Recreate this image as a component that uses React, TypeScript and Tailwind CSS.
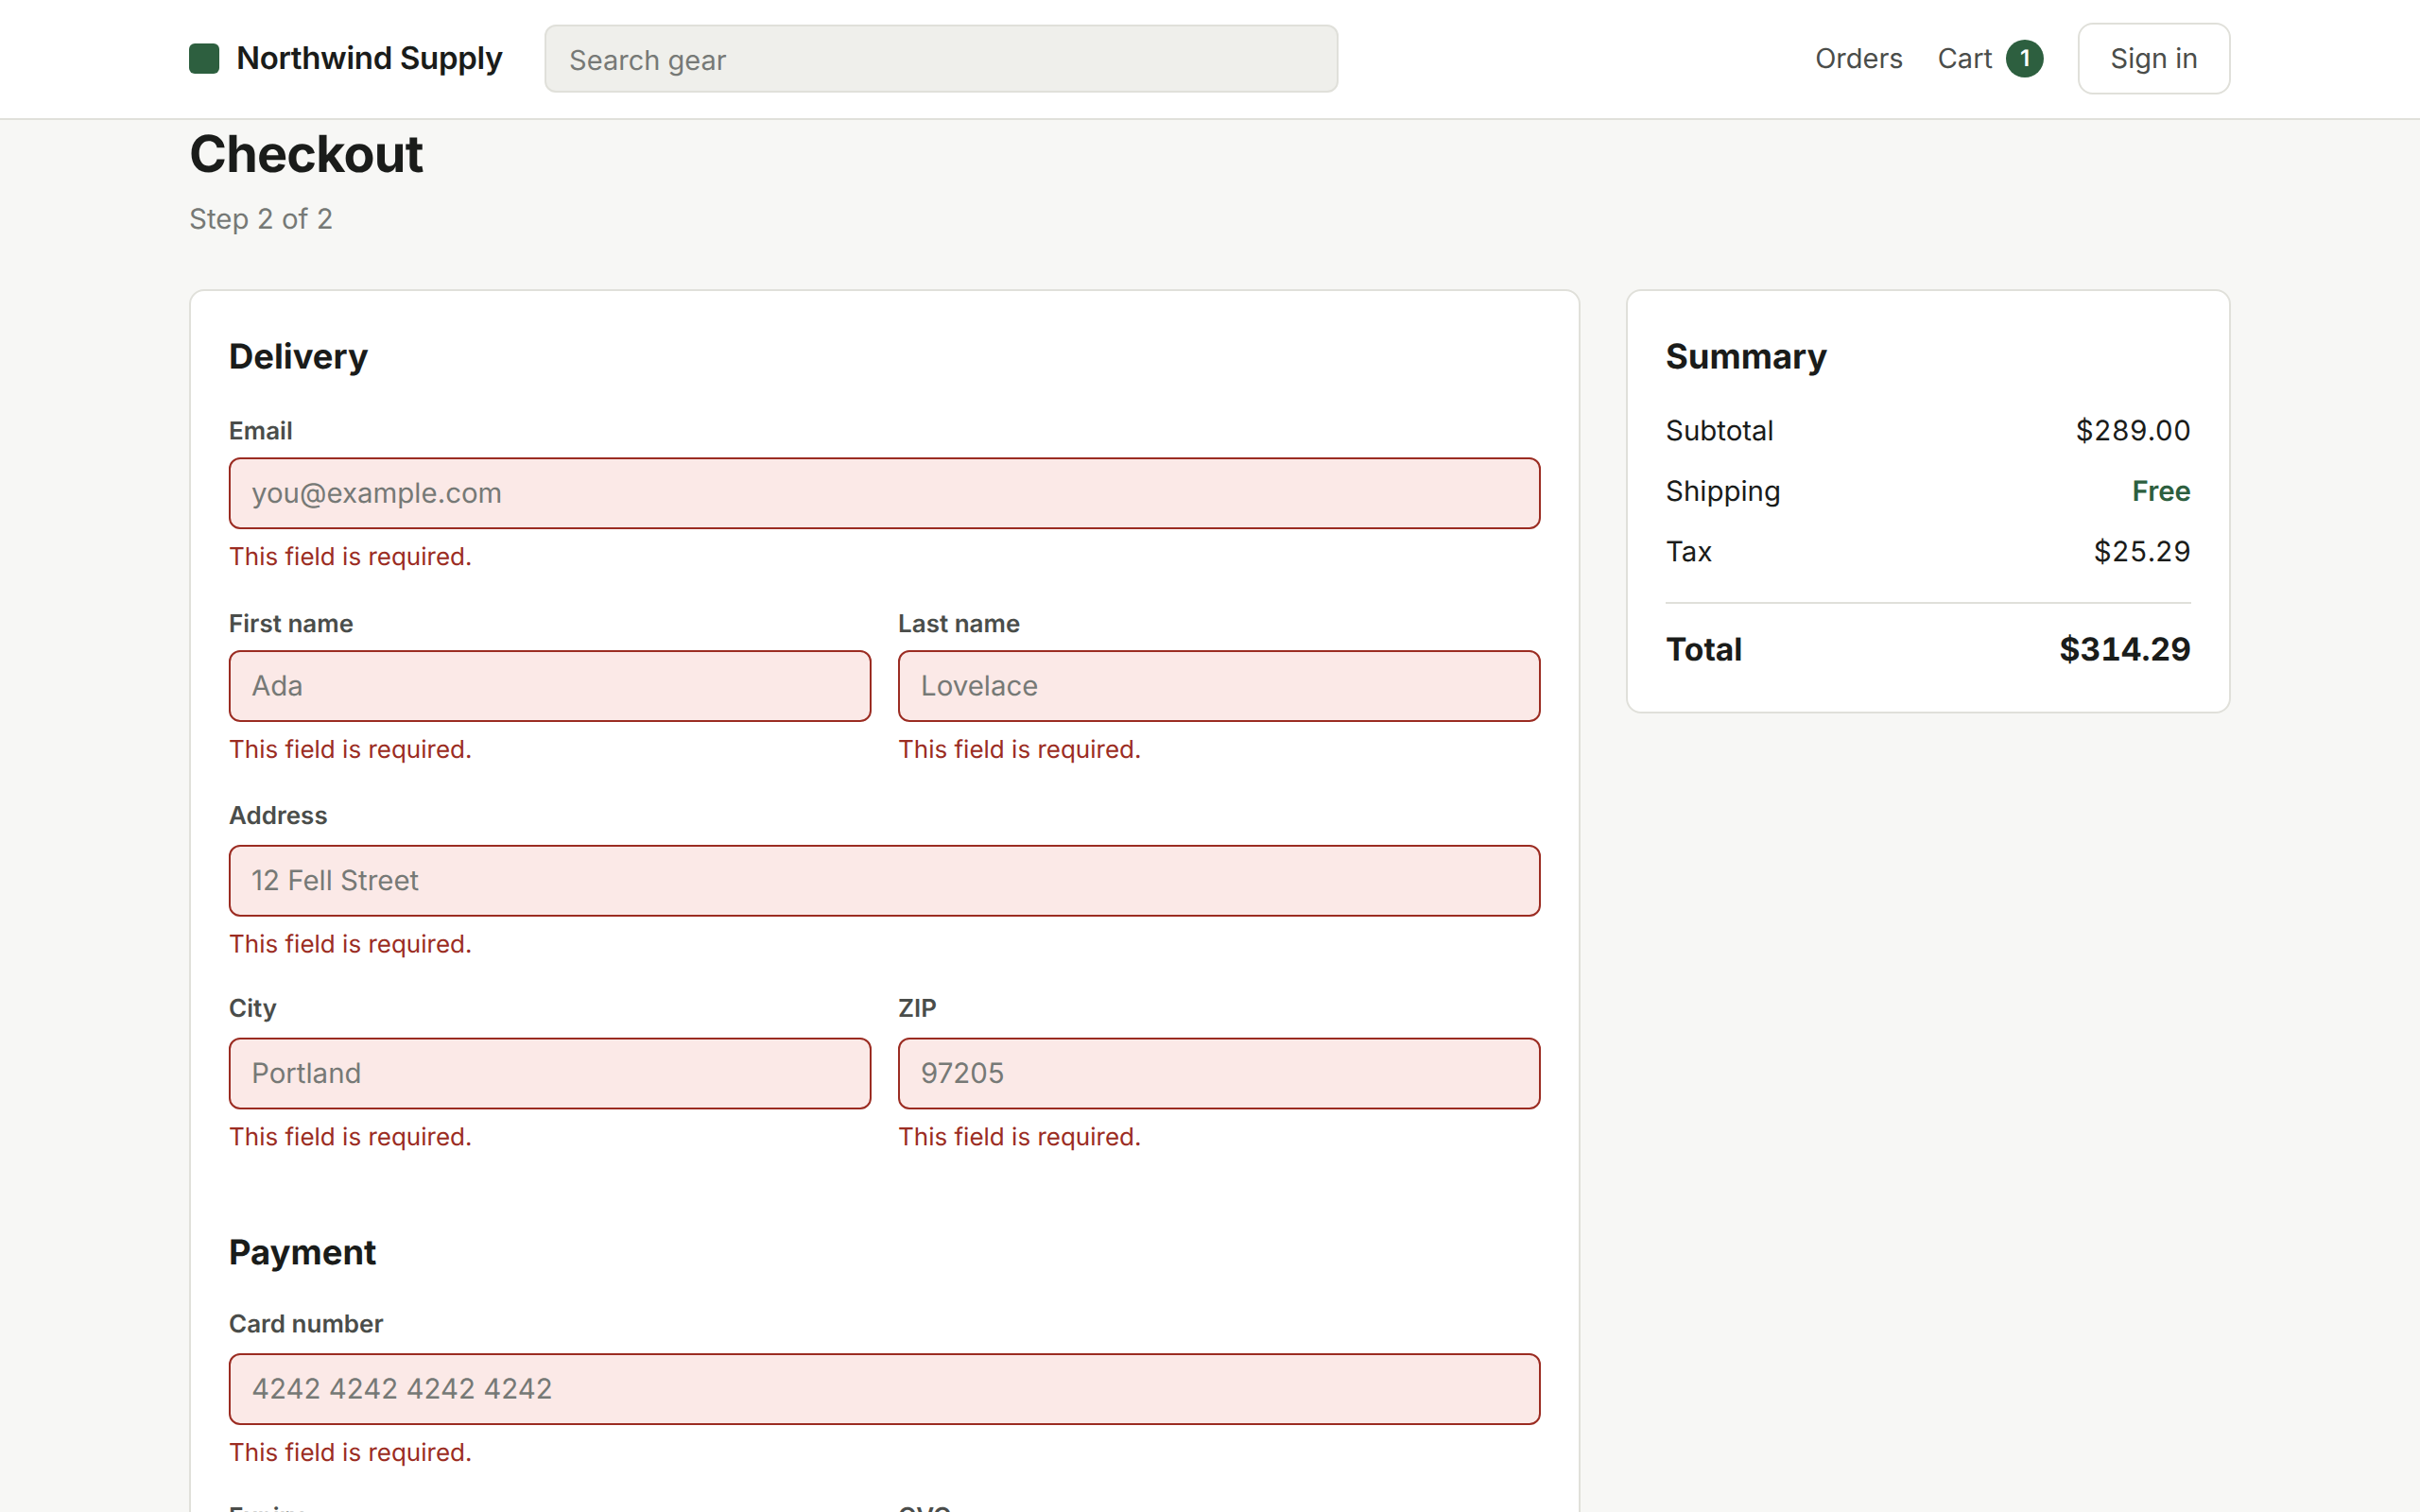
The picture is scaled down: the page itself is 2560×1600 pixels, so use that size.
import React from 'react'

function Field({ label, placeholder, low }: { label: string; placeholder: string; low?: boolean }) {
  return (
    <div className="flex flex-col min-w-0">
      <label className={`h-[38px] text-[26px] leading-[38px] font-semibold text-[#4a4d4a] ${low ? 'mt-[2px] mb-[8px]' : '-mt-[1px] mb-[11px]'}`}>{label}</label>
      <input
        placeholder={placeholder}
        className="h-[76px] w-full rounded-[12px] border-2 border-[#9b2c22] bg-[#fbe9e7] px-[22px] text-[29.44px] text-[#1a1c1a] outline-none [text-rendering:geometricPrecision] placeholder:text-[#767976]"
      />
      <p className="mt-[9px] h-[41px] text-[26px] leading-[42px] text-[#9b2c22]">This field is required.</p>
    </div>
  )
}

function Row({ label, value, green }: { label: string; value: string; green?: boolean }) {
  return (
    <div className="flex justify-between h-[44px] items-center text-[29.44px] text-[#1a1c1a]">
      <span>{label}</span>
      <span className={green ? 'font-semibold text-[#2d5f3f]' : 'tabular-nums'}>{value}</span>
    </div>
  )
}

export default function App() {
  return (
    <div className="h-screen overflow-hidden bg-[#f7f7f5] font-['Inter',sans-serif] text-[#1a1c1a] [text-rendering:geometricPrecision]">
      <header className="h-[127px] bg-white border-b-2 border-[#e0e0da]">
        <div className="mx-[200px] h-[124px] flex items-center justify-between">
          <div className="flex items-center">
            <span className="w-[32px] h-[32px] rounded-[6px] bg-[#2d5f3f]" />
            <span className="ml-[18px] text-[33px] font-semibold tracking-[-0.01em]">Northwind Supply</span>
            <input
              placeholder="Search gear"
              className="ml-[44px] w-[840px] h-[72px] rounded-[12px] border-2 border-[#e0e0da] bg-[#efefeb] px-[24px] pt-[2px] text-[29px] outline-none [text-rendering:geometricPrecision] placeholder:text-[#767976]"
            />
          </div>
          <nav className="flex items-center text-[29px] text-[#4a4d4a]">
            <a>Orders</a>
            <a className="ml-[36px]">Cart</a>
            <span className="ml-[14px] w-[40px] h-[40px] rounded-full bg-[#2d5f3f] text-white text-[24px] font-semibold flex items-center justify-center">1</span>
            <button className="ml-[36px] w-[162px] h-[76px] rounded-[16px] border-2 border-[#e0e0da] bg-white">Sign in</button>
          </nav>
        </div>
      </header>

      <main className="mx-[200px]">
        <h1 className="h-[68px] text-[54px] leading-[68px] font-bold tracking-[-0.015em] pt-[3px]">Checkout</h1>
        <p className="mt-[19px] text-[29.44px] leading-[36px] text-[#767976]">Step 2 of 2</p>

        <div className="mt-[56px] grid grid-cols-[1472px_640px] gap-[48px] items-start">
          <section className="bg-white border-2 border-[#e0e0da] rounded-[16px] px-[40px] pt-[45px] pb-[40px]">
            <h2 className="h-[48px] text-[36.4px] leading-[48px] font-bold mb-[35px]">Delivery</h2>
            <div className="flex flex-col gap-[30px]">
              <Field label="Email" placeholder="you@example.com" low />
              <div className="grid grid-cols-2 gap-[28px]">
                <Field label="First name" placeholder="Ada" low />
                <Field label="Last name" placeholder="Lovelace" low />
              </div>
              <div className="mt-[2px]">
                <Field label="Address" placeholder="12 Fell Street" />
              </div>
              <div className="grid grid-cols-2 gap-[28px]">
                <Field label="City" placeholder="Portland" />
                <Field label="ZIP" placeholder="97205" />
              </div>
            </div>

            <h2 className="mt-[77px] h-[48px] text-[36.4px] leading-[48px] font-bold mb-[35px]">Payment</h2>
            <div className="flex flex-col gap-[30px]">
              <Field label="Card number" placeholder="4242 4242 4242 4242" />
              <div className="grid grid-cols-2 gap-[28px]">
                <Field label="Expiry" placeholder="MM / YY" />
                <Field label="CVC" placeholder="123" />
              </div>
            </div>
          </section>

          <aside className="bg-white border-2 border-[#e0e0da] rounded-[16px] px-[40px] pt-[45px] pb-[40px]">
            <h2 className="h-[48px] text-[36.4px] leading-[48px] font-bold mb-[33px]">Summary</h2>
            <div className="flex flex-col gap-[20px]">
              <Row label="Subtotal" value="$289.00" />
              <Row label="Shipping" value="Free" green />
              <Row label="Tax" value="$25.29" />
            </div>
            <div className="mt-[31px] border-t-2 border-[#e0e0da] pt-[25px] flex justify-between items-center h-[76px] text-[33.6px] font-bold">
              <span>Total</span>
              <span className="tabular-nums">$314.29</span>
            </div>
          </aside>
        </div>
      </main>
    </div>
  )
}
